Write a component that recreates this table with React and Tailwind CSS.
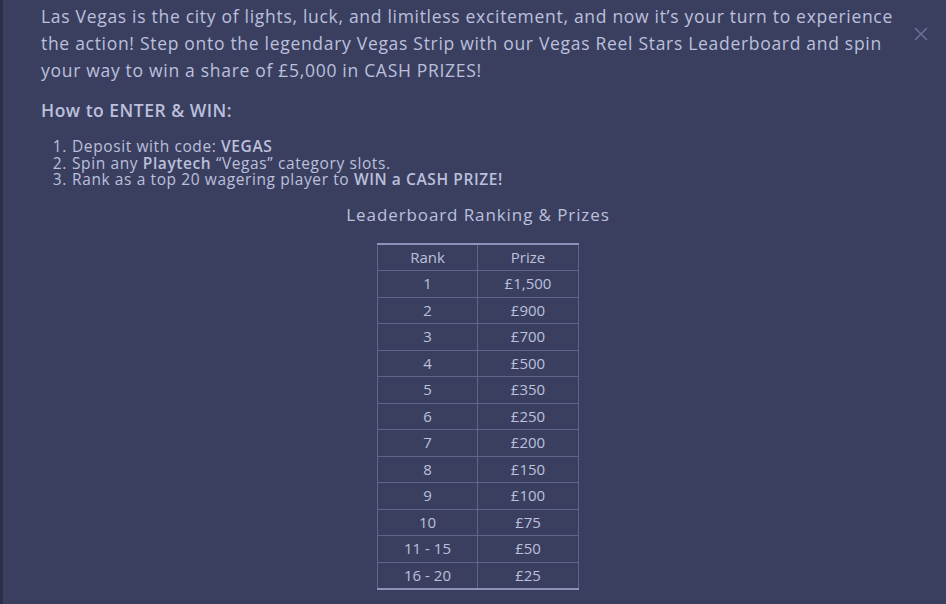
import React from "react";

const rows = [
  ["1", "£1,500"],
  ["2", "£900"],
  ["3", "£700"],
  ["4", "£500"],
  ["5", "£350"],
  ["6", "£250"],
  ["7", "£200"],
  ["8", "£150"],
  ["9", "£100"],
  ["10", "£75"],
  ["11 - 15", "£50"],
  ["16 - 20", "£25"],
];

export default function App() {
  return (
    <div
      className="relative flex min-h-screen w-full bg-[#3a3f60] text-[#bcc0dc]"
      style={{ fontFamily: "'Open Sans', 'Noto Sans', sans-serif" }}
    >
      {/* left edge strip */}
      <div className="w-[3px] shrink-0 bg-[#2b2f48]" />

      <div className="ml-[38px] w-[874px] pt-[3px]">
        <p className="text-[17.5px] leading-[27px] tracking-[0.7px]">
          Las Vegas is the city of lights, luck, and limitless excitement, and now it’s your turn to experience
          <br />
          the action! Step onto the legendary Vegas Strip with our Vegas Reel Stars Leaderboard and spin
          <br />
          your way to win a share of £5,000 in CASH PRIZES!
        </p>

        <h3 className="mt-[13px] text-[17.5px] font-semibold leading-[27px] tracking-[0.5px]">How to ENTER &amp; WIN:</h3>

        <ol className="mt-[14px] pl-[9px] text-[15.5px] leading-[16.5px] tracking-[0.6px]">
          <li className="flex">
            <span className="w-[17px] text-right mr-[5px]">1.</span>
            <span>
              Deposit with code: <b className="font-semibold">VEGAS</b>
            </span>
          </li>
          <li className="flex">
            <span className="w-[17px] text-right mr-[5px]">2.</span>
            <span>
              Spin any <b className="font-semibold">Playtech</b> “Vegas” category slots.
            </span>
          </li>
          <li className="flex">
            <span className="w-[17px] text-right mr-[5px]">3.</span>
            <span>
              Rank as a top 20 wagering player to <b className="font-semibold">WIN a CASH PRIZE!</b>
            </span>
          </li>
        </ol>

        <p className="mt-[15px] text-center text-[17px] leading-[24px] tracking-[0.9px]">Leaderboard Ranking &amp; Prizes</p>

        <div className="mt-[16px] flex justify-center">
          <table className="w-[202px] border-collapse border-x border-[#5f668c] text-center text-[15px]">
            <thead>
              <tr className="border-t-2 border-[#8d93b8]">
                <th className="h-[27px] w-[100px] border-r border-b border-[#5f668c] font-medium">Rank</th>
                <th className="h-[27px] border-b border-[#5f668c] font-medium">Prize</th>
              </tr>
            </thead>
            <tbody>
              {rows.map(([r, p], i) => (
                <tr
                  key={r}
                  className={
                    i === rows.length - 1
                      ? "border-b-2 border-[#8d93b8]"
                      : "border-b border-[#5f668c]"
                  }
                >
                  <td className="h-[26.5px] border-r border-[#5f668c] leading-none">{r}</td>
                  <td className="h-[26.5px] leading-none">{p}</td>
                </tr>
              ))}
            </tbody>
          </table>
        </div>
      </div>

      {/* close */}
      <button className="absolute right-[18px] top-[27px] text-[#6b7199]">
        <svg width="14" height="14" viewBox="0 0 14 14" stroke="currentColor" strokeWidth="1.5" fill="none">
          <path d="M1 1L13 13M13 1L1 13" />
        </svg>
      </button>
    </div>
  );
}
